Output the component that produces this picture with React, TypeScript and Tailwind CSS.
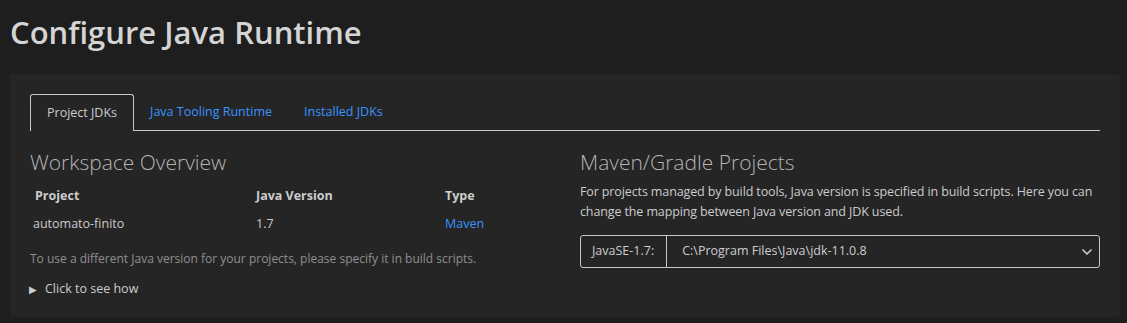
import { ChevronDown } from 'lucide-react';

const font = { fontFamily: '"Open Sans", "Noto Sans", sans-serif' };

const tabs = ['Project JDKs', 'Java Tooling Runtime', 'Installed JDKs'];

const App = () => {
    return (
        <div className="min-h-[323px] w-[1127px] bg-[#1e1e1e] text-[#cccccc] pl-[10px] pr-[7px] pt-[12px]" style={font}>
            <h1 className="text-[31px] font-semibold leading-[40px] text-[#d4d4d4]">Configure Java Runtime</h1>

            {/* Panel */}
            <div className="mt-[22px] h-[243px] rounded-[4px] bg-[#252526] px-[20px] pt-[20px]">
                {/* Tabs */}
                <div className="flex border-b border-[#c8c8c8] text-[12.5px]">
                    {tabs.map((tab, i) => (
                        <div
                            key={tab}
                            className={`flex items-center px-[16px] ${i === 0
                                ? 'h-[37px] border border-b-0 border-[#c8c8c8] rounded-t-[3px] text-[#cccccc] -mb-px bg-[#252526]'
                                : 'h-[36px] text-[#3794ff]'
                                }`}
                        >
                            {tab}
                        </div>
                    ))}
                </div>

                <div className="grid grid-cols-2 gap-[30px] mt-[18px]">
                    {/* Workspace Overview */}
                    <div>
                        <h2 className="text-[21px] font-light leading-[26px] text-[#b4b4b4]">Workspace Overview</h2>
                        <table className="mt-[12px] text-[12.5px] w-full">
                            <thead>
                                <tr className="text-left">
                                    <th className="w-[221px] px-[5px] pb-[9px] font-bold">Project</th>
                                    <th className="w-[189px] px-[5px] pb-[9px] font-bold">Java Version</th>
                                    <th className="px-[5px] pb-[9px] font-bold">Type</th>
                                </tr>
                            </thead>
                            <tbody>
                                <tr>
                                    <td className="px-[3px]">automato-finito</td>
                                    <td className="px-[5px]">1.7</td>
                                    <td className="px-[5px] text-[#3794ff]">Maven</td>
                                </tr>
                            </tbody>
                        </table>
                        <p className="mt-[16px] text-[12px] text-[#8f8f8f]">To use a different Java version for your projects, please specify it in build scripts.</p>
                        <div className="mt-[12px] flex items-center gap-[8px] text-[12.5px]">
                            <span className="text-[10px] leading-none text-[#cccccc] -ml-px">▶</span>
                            <span>Click to see how</span>
                        </div>
                    </div>

                    {/* Maven/Gradle Projects */}
                    <div>
                        <h2 className="text-[21px] font-light leading-[26px] text-[#b4b4b4]">Maven/Gradle Projects</h2>
                        <p className="mt-[7px] text-[12.5px] leading-[20px] tracking-[-0.12px] text-[#cccccc]">
                            For projects managed by build tools, Java version is specified in build scripts. Here you can change the mapping between Java version and JDK used.
                        </p>
                        <div className="mt-[13px] flex h-[33px] rounded-[3px] border border-[#c8c8c8] text-[12.5px]">
                            <div className="flex items-center pl-[11px] pr-[12px] border-r border-[#c8c8c8]">JavaSE-1.7:</div>
                            <div className="flex flex-1 items-center justify-between pl-[15px] pr-[4px]">
                                <span>C:\Program Files\Java\jdk-11.0.8</span>
                                <ChevronDown size={16} strokeWidth={2.5} />
                            </div>
                        </div>
                    </div>
                </div>
            </div>
        </div>
    );
};

export default App;
